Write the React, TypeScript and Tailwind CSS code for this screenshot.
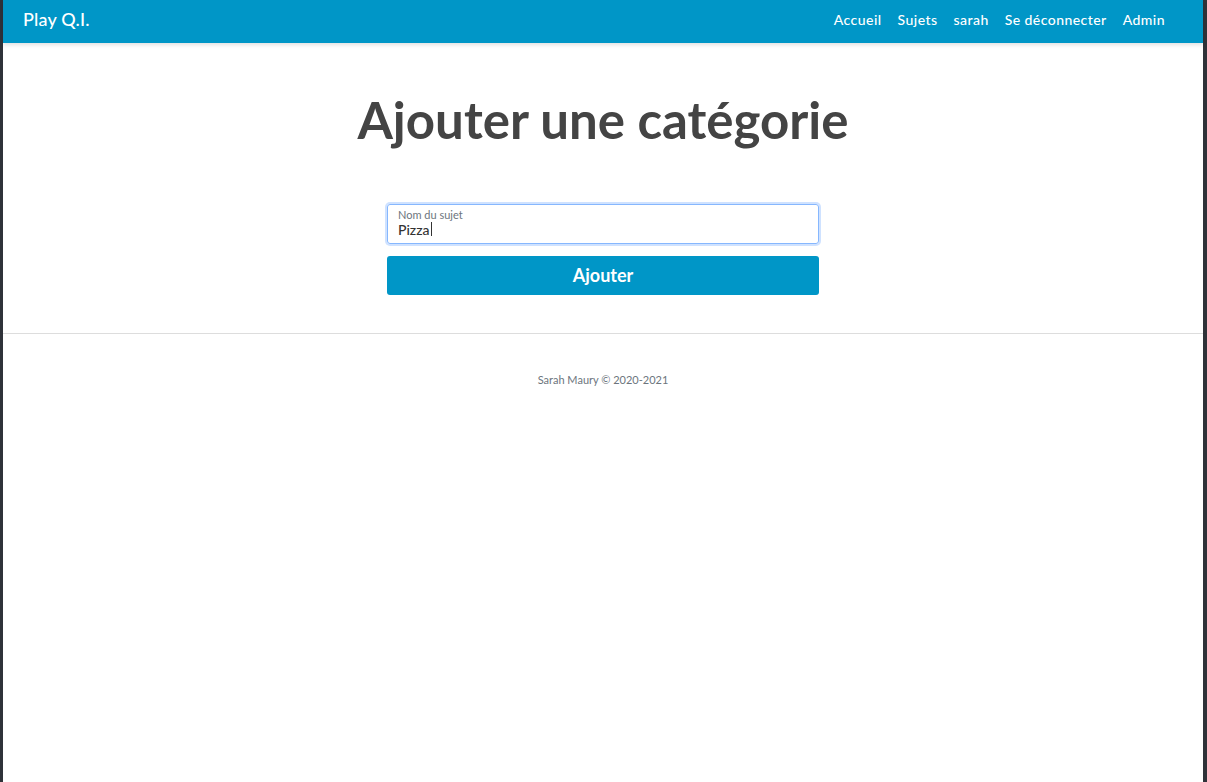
export default function App() {
  const links = ["Accueil", "Sujets", "sarah", "Se déconnecter", "Admin"];

  return (
    <div className="min-h-[782px] bg-[#2f3239] px-[3px] pr-[4px] font-['Lato',sans-serif]">
      <div className="min-h-[782px] bg-white">
        {/* Navbar */}
        <nav className="relative z-10 flex h-[43px] items-center justify-between bg-[#0096c7] pb-[4px] pl-[20px] pr-[38px] shadow-[0_2px_4px_rgba(0,0,0,0.12)]">
          <span className="text-[18px] font-medium tracking-[0.2px] text-white">Play Q.I.</span>
          <ul className="flex items-center gap-[16px] text-[14px] font-medium tracking-[0.45px] text-white">
            {links.map((l) => (
              <li key={l}>{l}</li>
            ))}
          </ul>
        </nav>

        {/* Main */}
        <main className="flex flex-col items-center pb-[38px] pt-[47px]">
          <h1 className="text-[51px] font-bold leading-[60px] text-[#444444]">Ajouter une catégorie</h1>

          <form className="mt-[54px] flex w-[432px] flex-col gap-[12px]">
            <div className="flex h-[40px] flex-col justify-center rounded-[3px] border border-[#86b7fe] px-[10px] pb-[3px] shadow-[0_0_0_2px_rgba(13,110,253,0.2)]">
              <label className="text-[11px] leading-[13px] text-[#6c757d]">Nom du sujet</label>
              <div className="flex items-center text-[14px] font-medium leading-[17px] text-[#333]">
                Pizza<span className="ml-[1px] inline-block h-[14px] w-[1px] bg-[#333]" />
              </div>
            </div>
            <button
              type="button"
              className="h-[39px] rounded-[3px] bg-[#0096c7] text-[18px] font-bold text-white"
            >
              Ajouter
            </button>
          </form>
        </main>

        {/* Footer */}
        <footer className="border-t border-[#dddddd] pt-[38px] text-center text-[11px] text-[#6c757d]">
          Sarah Maury © 2020-2021
        </footer>
      </div>
    </div>
  );
}
